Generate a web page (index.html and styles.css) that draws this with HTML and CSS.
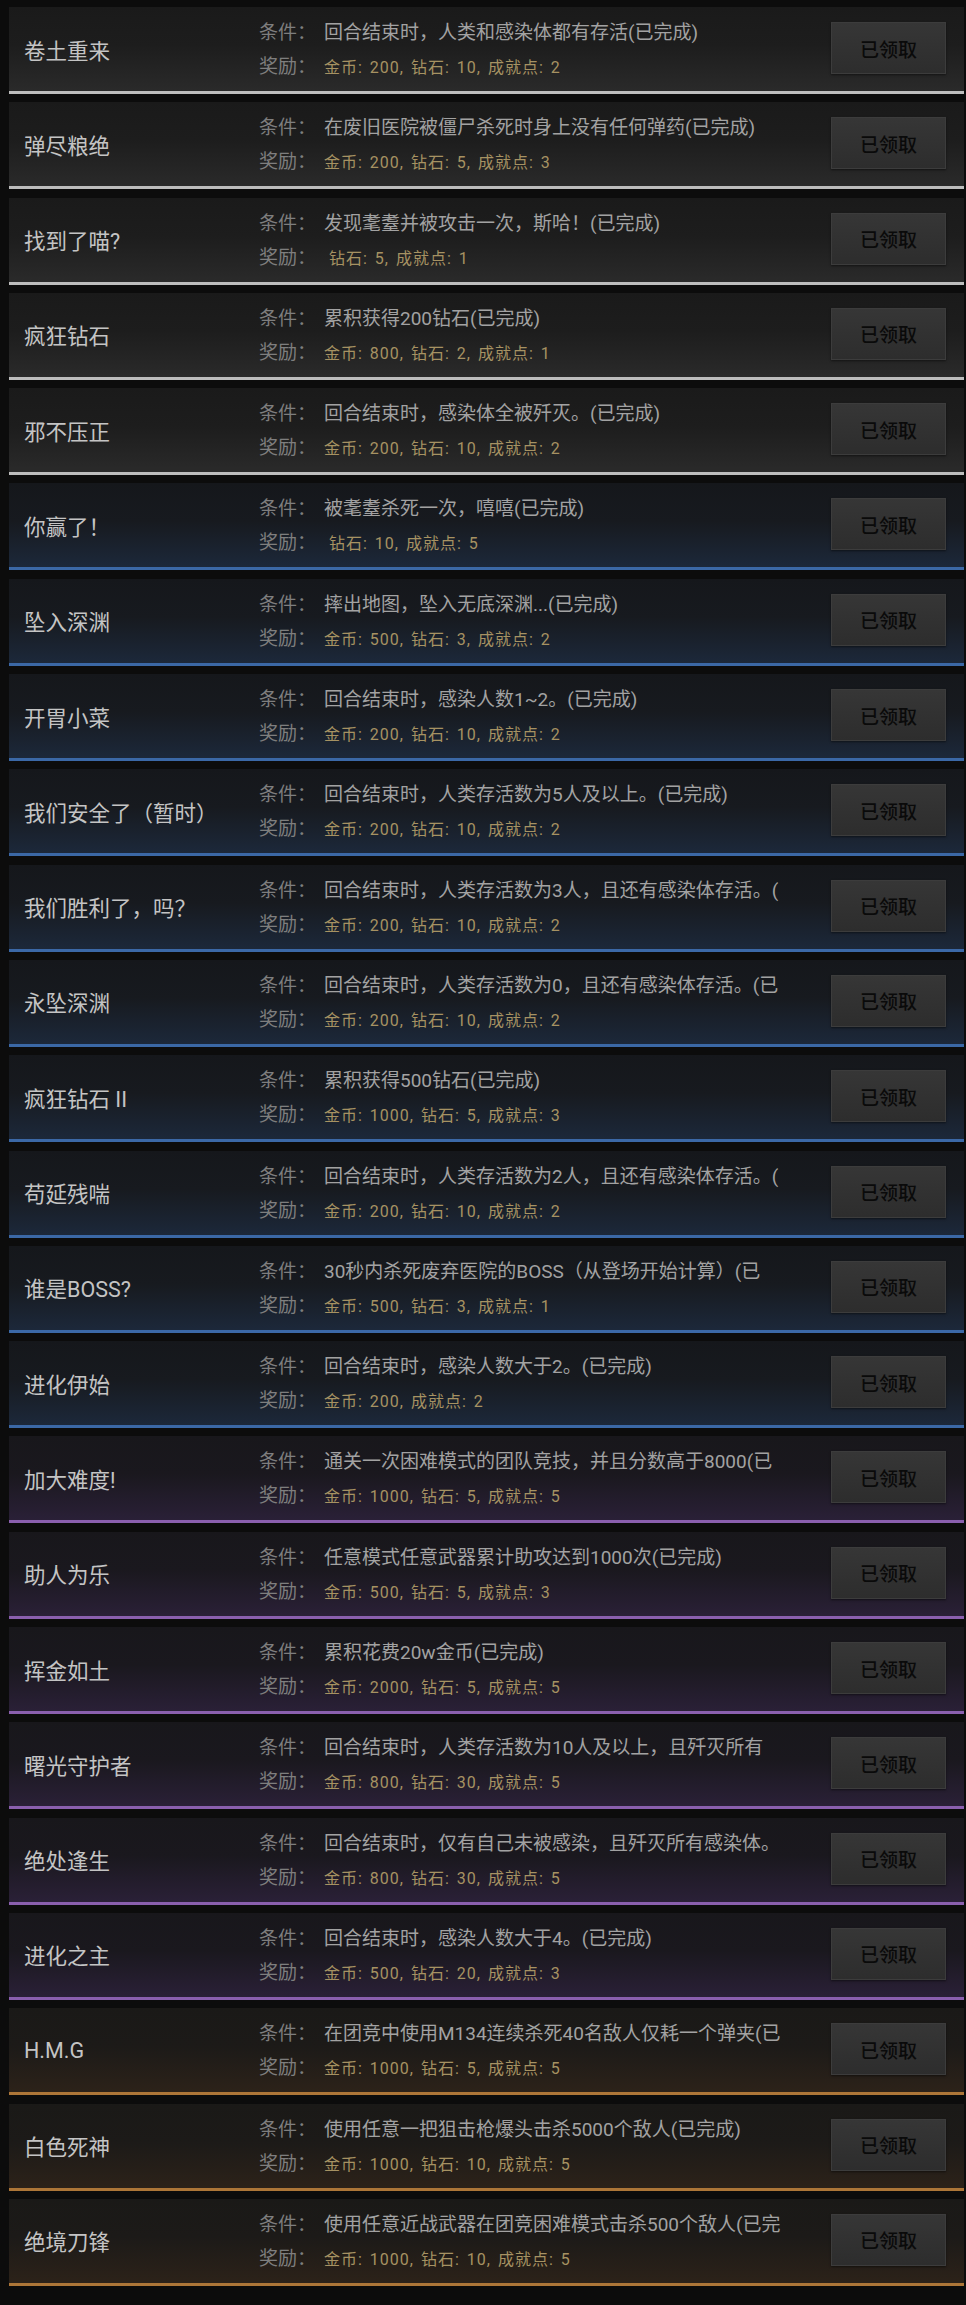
FILE: index.html
```html
<!DOCTYPE html>
<html lang="zh-CN">
<head>
    <meta charset="UTF-8">
    <meta name="viewport" content="width=device-width, initial-scale=1.0">
    <title>成就</title>
    <link rel="stylesheet" href="styles.css">
</head>
<body>
    <div class="list">
        <div class="card white">
            <div class="title">卷土重来</div>
            <div class="info">
                <div class="cond"><span class="label">条件：</span>回合结束时，人类和感染体都有存活(已完成)</div>
                <div class="reward"><span class="label">奖励：</span><span class="gold">金币: 200, 钻石: 10, 成就点: 2</span></div>
            </div>
            <div class="btn">已领取</div>
        </div>
        <div class="card white">
            <div class="title">弹尽粮绝</div>
            <div class="info">
                <div class="cond"><span class="label">条件：</span>在废旧医院被僵尸杀死时身上没有任何弹药(已完成)</div>
                <div class="reward"><span class="label">奖励：</span><span class="gold">金币: 200, 钻石: 5, 成就点: 3</span></div>
            </div>
            <div class="btn">已领取</div>
        </div>
        <div class="card white">
            <div class="title">找到了喵?</div>
            <div class="info">
                <div class="cond"><span class="label">条件：</span>发现耄耋并被攻击一次，斯哈！(已完成)</div>
                <div class="reward"><span class="label">奖励：</span><span class="gold lead">钻石: 5, 成就点: 1</span></div>
            </div>
            <div class="btn">已领取</div>
        </div>
        <div class="card white">
            <div class="title">疯狂钻石</div>
            <div class="info">
                <div class="cond"><span class="label">条件：</span>累积获得200钻石(已完成)</div>
                <div class="reward"><span class="label">奖励：</span><span class="gold">金币: 800, 钻石: 2, 成就点: 1</span></div>
            </div>
            <div class="btn">已领取</div>
        </div>
        <div class="card white">
            <div class="title">邪不压正</div>
            <div class="info">
                <div class="cond"><span class="label">条件：</span>回合结束时，感染体全被歼灭。(已完成)</div>
                <div class="reward"><span class="label">奖励：</span><span class="gold">金币: 200, 钻石: 10, 成就点: 2</span></div>
            </div>
            <div class="btn">已领取</div>
        </div>
        <div class="card blue">
            <div class="title">你赢了！</div>
            <div class="info">
                <div class="cond"><span class="label">条件：</span>被耄耋杀死一次，嘻嘻(已完成)</div>
                <div class="reward"><span class="label">奖励：</span><span class="gold lead">钻石: 10, 成就点: 5</span></div>
            </div>
            <div class="btn">已领取</div>
        </div>
        <div class="card blue">
            <div class="title">坠入深渊</div>
            <div class="info">
                <div class="cond"><span class="label">条件：</span>摔出地图，坠入无底深渊...(已完成)</div>
                <div class="reward"><span class="label">奖励：</span><span class="gold">金币: 500, 钻石: 3, 成就点: 2</span></div>
            </div>
            <div class="btn">已领取</div>
        </div>
        <div class="card blue">
            <div class="title">开胃小菜</div>
            <div class="info">
                <div class="cond"><span class="label">条件：</span>回合结束时，感染人数1~2。(已完成)</div>
                <div class="reward"><span class="label">奖励：</span><span class="gold">金币: 200, 钻石: 10, 成就点: 2</span></div>
            </div>
            <div class="btn">已领取</div>
        </div>
        <div class="card blue">
            <div class="title">我们安全了（暂时）</div>
            <div class="info">
                <div class="cond"><span class="label">条件：</span>回合结束时，人类存活数为5人及以上。(已完成)</div>
                <div class="reward"><span class="label">奖励：</span><span class="gold">金币: 200, 钻石: 10, 成就点: 2</span></div>
            </div>
            <div class="btn">已领取</div>
        </div>
        <div class="card blue">
            <div class="title">我们胜利了，吗？</div>
            <div class="info">
                <div class="cond"><span class="label">条件：</span>回合结束时，人类存活数为3人，且还有感染体存活。(</div>
                <div class="reward"><span class="label">奖励：</span><span class="gold">金币: 200, 钻石: 10, 成就点: 2</span></div>
            </div>
            <div class="btn">已领取</div>
        </div>
        <div class="card blue">
            <div class="title">永坠深渊</div>
            <div class="info">
                <div class="cond"><span class="label">条件：</span>回合结束时，人类存活数为0，且还有感染体存活。(已</div>
                <div class="reward"><span class="label">奖励：</span><span class="gold">金币: 200, 钻石: 10, 成就点: 2</span></div>
            </div>
            <div class="btn">已领取</div>
        </div>
        <div class="card blue">
            <div class="title">疯狂钻石 II</div>
            <div class="info">
                <div class="cond"><span class="label">条件：</span>累积获得500钻石(已完成)</div>
                <div class="reward"><span class="label">奖励：</span><span class="gold">金币: 1000, 钻石: 5, 成就点: 3</span></div>
            </div>
            <div class="btn">已领取</div>
        </div>
        <div class="card blue">
            <div class="title">苟延残喘</div>
            <div class="info">
                <div class="cond"><span class="label">条件：</span>回合结束时，人类存活数为2人，且还有感染体存活。(</div>
                <div class="reward"><span class="label">奖励：</span><span class="gold">金币: 200, 钻石: 10, 成就点: 2</span></div>
            </div>
            <div class="btn">已领取</div>
        </div>
        <div class="card blue">
            <div class="title">谁是BOSS?</div>
            <div class="info">
                <div class="cond"><span class="label">条件：</span>30秒内杀死废弃医院的BOSS（从登场开始计算）(已</div>
                <div class="reward"><span class="label">奖励：</span><span class="gold">金币: 500, 钻石: 3, 成就点: 1</span></div>
            </div>
            <div class="btn">已领取</div>
        </div>
        <div class="card blue">
            <div class="title">进化伊始</div>
            <div class="info">
                <div class="cond"><span class="label">条件：</span>回合结束时，感染人数大于2。(已完成)</div>
                <div class="reward"><span class="label">奖励：</span><span class="gold">金币: 200, 成就点: 2</span></div>
            </div>
            <div class="btn">已领取</div>
        </div>
        <div class="card purple">
            <div class="title">加大难度!</div>
            <div class="info">
                <div class="cond"><span class="label">条件：</span>通关一次困难模式的团队竞技，并且分数高于8000(已</div>
                <div class="reward"><span class="label">奖励：</span><span class="gold">金币: 1000, 钻石: 5, 成就点: 5</span></div>
            </div>
            <div class="btn">已领取</div>
        </div>
        <div class="card purple">
            <div class="title">助人为乐</div>
            <div class="info">
                <div class="cond"><span class="label">条件：</span>任意模式任意武器累计助攻达到1000次(已完成)</div>
                <div class="reward"><span class="label">奖励：</span><span class="gold">金币: 500, 钻石: 5, 成就点: 3</span></div>
            </div>
            <div class="btn">已领取</div>
        </div>
        <div class="card purple">
            <div class="title">挥金如土</div>
            <div class="info">
                <div class="cond"><span class="label">条件：</span>累积花费20w金币(已完成)</div>
                <div class="reward"><span class="label">奖励：</span><span class="gold">金币: 2000, 钻石: 5, 成就点: 5</span></div>
            </div>
            <div class="btn">已领取</div>
        </div>
        <div class="card purple">
            <div class="title">曙光守护者</div>
            <div class="info">
                <div class="cond"><span class="label">条件：</span>回合结束时，人类存活数为10人及以上，且歼灭所有</div>
                <div class="reward"><span class="label">奖励：</span><span class="gold">金币: 800, 钻石: 30, 成就点: 5</span></div>
            </div>
            <div class="btn">已领取</div>
        </div>
        <div class="card purple">
            <div class="title">绝处逢生</div>
            <div class="info">
                <div class="cond"><span class="label">条件：</span>回合结束时，仅有自己未被感染，且歼灭所有感染体。</div>
                <div class="reward"><span class="label">奖励：</span><span class="gold">金币: 800, 钻石: 30, 成就点: 5</span></div>
            </div>
            <div class="btn">已领取</div>
        </div>
        <div class="card purple">
            <div class="title">进化之主</div>
            <div class="info">
                <div class="cond"><span class="label">条件：</span>回合结束时，感染人数大于4。(已完成)</div>
                <div class="reward"><span class="label">奖励：</span><span class="gold">金币: 500, 钻石: 20, 成就点: 3</span></div>
            </div>
            <div class="btn">已领取</div>
        </div>
        <div class="card orange">
            <div class="title">H.M.G</div>
            <div class="info">
                <div class="cond"><span class="label">条件：</span>在团竞中使用M134连续杀死40名敌人仅耗一个弹夹(已</div>
                <div class="reward"><span class="label">奖励：</span><span class="gold">金币: 1000, 钻石: 5, 成就点: 5</span></div>
            </div>
            <div class="btn">已领取</div>
        </div>
        <div class="card orange">
            <div class="title">白色死神</div>
            <div class="info">
                <div class="cond"><span class="label">条件：</span>使用任意一把狙击枪爆头击杀5000个敌人(已完成)</div>
                <div class="reward"><span class="label">奖励：</span><span class="gold">金币: 1000, 钻石: 10, 成就点: 5</span></div>
            </div>
            <div class="btn">已领取</div>
        </div>
        <div class="card orange">
            <div class="title">绝境刀锋</div>
            <div class="info">
                <div class="cond"><span class="label">条件：</span>使用任意近战武器在团竞困难模式击杀500个敌人(已完</div>
                <div class="reward"><span class="label">奖励：</span><span class="gold">金币: 1000, 钻石: 10, 成就点: 5</span></div>
            </div>
            <div class="btn">已领取</div>
        </div>
    </div>
</body>
</html>
```
FILE: styles.css
```css
body {
    margin: 0;
    padding: 7px 2px 0 9px;
    min-height: 2305px;
    box-sizing: border-box;
    background: #0c0c0c;
    font-family: Roboto, "Noto Sans CJK SC", sans-serif;
}

.card {
    display: flex;
    height: 84px;
    margin-bottom: 8.3px;
    border-bottom: 3px solid #bdbdbd;
    background: linear-gradient(#1a1a1a, #1d1d1d 45%, #2a2a2a);
}
.card.white {
    border-bottom-color: #bdbdbd;
}
.card.blue {
    border-bottom-color: #3b68a6;
    background: linear-gradient(#15171b, #171a1f 45%, #1c283a);
}
.card.purple {
    border-bottom-color: #8a5fae;
    background: linear-gradient(#18171b, #1a181e 45%, #2a2037);
}
.card.orange {
    border-bottom-color: #ad7638;
    background: linear-gradient(#1a1917, #1c1a18 45%, #2c2219);
}

.title {
    width: 235px;
    padding-left: 15px;
    align-self: center;
    font-size: 21.5px;
    color: #c4c4c4;
    white-space: nowrap;
}

.info {
    flex-grow: 1;
    padding-top: 14px;
    white-space: nowrap;
    overflow: hidden;
}
.cond {
    font-size: 19px;
    line-height: 24px;
    color: #a2a2a2;
}
.reward {
    margin-top: 10px;
    font-size: 19px;
    line-height: 24px;
}
.label {
    display: inline-block;
    width: 65px;
    color: #7e7e7e;
}
.gold {
    font-size: 16px;
    color: #a69262;
    letter-spacing: 1px;
    word-spacing: 2px;
}
.gold.lead {
    padding-left: 5px;
}

.btn {
    width: 113px;
    height: 50px;
    margin: 15px 18px 0 0;
    display: flex;
    align-items: center;
    justify-content: center;
    border: 1px solid #3c3c3c;
    background: linear-gradient(#363636, #2d2d2d);
    box-shadow: 0 1px 2px rgba(0, 0, 0, 0.5);
    font-size: 19px;
    font-weight: 500;
    color: #0a0a0a;
}
```
